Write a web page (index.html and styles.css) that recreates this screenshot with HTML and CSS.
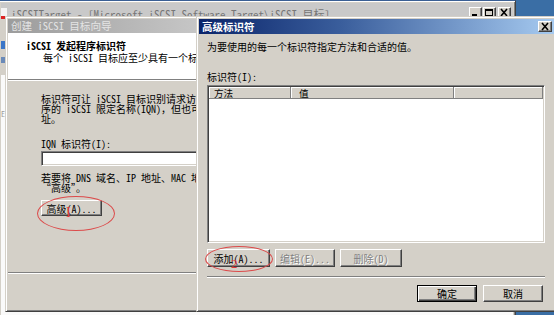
FILE: index.html
```html
<!DOCTYPE html>
<html lang="zh-CN">
<head>
<meta charset="utf-8">
<title>高级标识符</title>
<link rel="stylesheet" href="styles.css">
</head>
<body>
<div class="desktop">

  <div class="win app">
    <div class="app-title">
      <svg class="app-icon" width="7" height="16" viewBox="0 0 7 16"><rect x="0" y="3" width="6" height="8" fill="#f4f4f4"/><rect x="0" y="11" width="6" height="5" fill="#d22"/></svg>
      <span class="app-title-text">iSCSITarget - [Microsoft iSCSI Software Target\iSCSI 目标]</span>
      <div class="caps">
        <span class="cap"><svg width="11" height="9" viewBox="0 0 11 9"><rect x="2" y="6" width="5" height="2" fill="#000"/></svg></span>
        <span class="cap"><svg width="11" height="9" viewBox="0 0 11 9"><rect x="1.5" y="1.5" width="7" height="6" fill="none" stroke="#000"/><rect x="1" y="1" width="8" height="2" fill="#000"/></svg></span>
        <span class="cap cap-close"><svg width="11" height="9" viewBox="0 0 11 9"><path d="M2 1 L8 8 M8 1 L2 8" stroke="#000" stroke-width="1.6"/></svg></span>
      </div>
    </div>
    <div class="app-body">
      <div class="app-tools">
        <span class="tool tool-a"></span>
        <span class="tool tool-b"></span>
      </div>
      <div class="app-pane"><span class="pane-e">E</span></div>
    </div>
  </div>

  <div class="win wizard">
    <div class="title inactive">创建 iSCSI 目标向导</div>
    <div class="wiz-head">
      <div class="wiz-h1">iSCSI 发起程序标识符</div>
      <div class="wiz-h2">每个 iSCSI 目标应至少具有一个标识符。</div>
    </div>
    <div class="wiz-body">
      <p class="para">
        <span class="ln">标识符可让 iSCSI 目标识别请求访问的发起程序。默认标识符是发起程</span>
        <span class="ln">序的 iSCSI 限定名称(IQN)，但也可以使用 DNS 域名、IP 地址或 MAC 地</span>
        <span class="ln">址。</span>
      </p>
      <div class="field-label">IQN 标识符(I):</div>
      <div class="field"></div>
      <p class="para para2">
        <span class="ln">若要将 DNS 域名、IP 地址、MAC 地址用作标识符，请单击</span>
        <span class="ln">“高级”。</span>
      </p>
      <div class="wiz-btnrow"><span class="btn btn-adv">高级(A)...</span></div>
    </div>
    <div class="wiz-foot"></div>
  </div>

  <div class="win dialog">
    <div class="title active">
      <span>高级标识符</span>
      <span class="cap cap-close dlg-close"><svg width="11" height="9" viewBox="0 0 11 9"><path d="M2 1 L8 8 M8 1 L2 8" stroke="#000" stroke-width="1.6"/></svg></span>
    </div>
    <div class="dlg-body">
      <div class="desc">为要使用的每一个标识符指定方法和合适的值。</div>
      <div class="lbl">标识符(I):</div>
      <div class="list">
        <div class="list-head">
          <span class="col col-1">方法</span>
          <span class="col col-2">值</span>
          <span class="col col-3"></span>
        </div>
        <div class="list-rows"></div>
      </div>
      <div class="btnrow">
        <span class="btn btn-add">添加(A)...</span>
        <span class="btn btn-edit disabled">编辑(E)...</span>
        <span class="btn btn-del disabled">删除(D)</span>
      </div>
      <div class="sep"></div>
      <div class="okrow">
        <span class="btn btn-ok default">确定</span>
        <span class="btn btn-cancel">取消</span>
      </div>
    </div>
  </div>

  <div class="mark ring ring1"></div>
  <span class="mark note note1">I</span>
  <div class="mark ring ring2"></div>
  <span class="mark note note2">2</span>

</div>
</body>
</html>
```

FILE: styles.css
```css
html, body {
  margin: 0;
  padding: 0;
}

body {
  width: 554px;
  height: 315px;
  overflow: hidden;
  background: #3a6ea5;
  font-family: "Noto Sans Mono CJK SC", "Noto Sans CJK SC", sans-serif;
  font-size: 10px;
  color: #000;
}

.desktop {
  position: relative;
  width: 554px;
  height: 315px;
  overflow: hidden;
}

/* classic window frame */
.win {
  position: absolute;
  box-sizing: border-box;
  background: #d4d0c8;
  border: 1px solid;
  border-color: #d4d0c8 #404040 #404040 #d4d0c8;
  box-shadow: inset 1px 1px #fff, inset -1px -1px #808080;
  padding: 2px;
  display: flex;
  flex-direction: column;
}

/* background application window */
.app {
  left: -2px;
  top: 0;
  width: 518px;
  height: 330px;
  border-top-color: #3a5f94;
  background: #d4d0c8;
}

.app-title {
  height: 16px;
  display: flex;
  align-items: center;
  background: #c9c9c9;
  color: #767676;
  font-size: 11px;
}

.app-icon {
  flex: none;
  margin-top: 4px;
}

.app-title-text {
  margin-left: 3px;
  padding-top: 5px;
  white-space: nowrap;
}

.caps {
  margin-left: auto;
  display: flex;
  gap: 1px;
  padding-right: 2px;
  padding-top: 3px;
}

.cap {
  box-sizing: border-box;
  width: 13px;
  height: 12px;
  background: #d4d0c8;
  border: 1px solid;
  border-color: #fff #404040 #404040 #fff;
  box-shadow: inset -1px -1px #808080;
  display: flex;
  align-items: center;
  justify-content: center;
}

.cap-close {
  margin-left: 1px;
}

.app-body {
  flex: 1;
  display: flex;
  flex-direction: column;
  background: #fff;
}

.app-tools {
  height: 56px;
  background: #d4d0c8;
  display: flex;
  flex-direction: column;
  gap: 8px;
  padding-top: 22px;
  box-sizing: border-box;
}

.tool {
  display: block;
  width: 5px;
  height: 8px;
}

.tool-a { background: #3b76c8; }
.tool-b { background: #6a8ab8; height: 6px; }

.app-pane {
  flex: 1;
  background: #fafafa;
  color: #9a9a9a;
  padding-top: 30px;
}

.pane-e {
  font-size: 8px;
}

/* title bars */
.title {
  height: 14px;
  line-height: 14px;
  padding-left: 3px;
  white-space: nowrap;
  flex: none;
  display: flex;
  align-items: center;
}

.title.inactive {
  background: linear-gradient(90deg, #9c9c9c, #c6c6c6);
  color: #e4e4e4;
  font-size: 10.6px;
}

.title.active {
  height: 15px;
  background: linear-gradient(90deg, #0a246a 0%, #3a5e9c 40%, #a6caf0 100%);
  color: #fff;
  font-weight: bold;
  font-size: 10.5px;
  padding-right: 2px;
}

.dlg-close {
  margin-left: auto;
  width: 14px;
  height: 11px;
}

/* wizard (its right part lies under the dialog) */
.wizard {
  left: 5px;
  top: 16px;
  width: 194px;
  height: 296px;
  overflow: hidden;
}

.wiz-head {
  height: 47px;
  background: #fff;
  border-bottom: 1px solid #808080;
  box-shadow: 0 1px #fff;
  flex: none;
  padding-top: 7px;
  box-sizing: border-box;
  overflow: hidden;
}

.wiz-h1 {
  padding-left: 18px;
  font-weight: bold;
  line-height: 12px;
  white-space: nowrap;
}

.wiz-h2 {
  padding-left: 35px;
  line-height: 12px;
  white-space: nowrap;
}

.wiz-body {
  flex: none;
  height: 193px;
  padding: 14px 0 0 33px;
  box-sizing: border-box;
  border-bottom: 1px solid #808080;
  box-shadow: 0 1px #fff;
  white-space: nowrap;
  overflow: hidden;
}

.para {
  margin: 0;
  line-height: 10px;
}

.ln {
  display: block;
}

.field-label {
  margin-top: 14px;
  line-height: 12px;
}

.field {
  margin-top: 1px;
  height: 15px;
  width: 260px;
  box-sizing: border-box;
  background: #fff;
  border: 1px solid;
  border-color: #808080 #fff #fff #808080;
  box-shadow: inset 1px 1px #404040, inset -1px -1px #d4d0c8;
}

.para2 {
  margin-top: 7px;
}

.wiz-btnrow {
  margin-top: 7px;
  display: flex;
}

.wiz-foot {
  flex: 1;
}

/* buttons */
.btn {
  box-sizing: border-box;
  display: flex;
  align-items: center;
  justify-content: center;
  height: 17px;
  background: #d4d0c8;
  border: 1px solid;
  border-color: #fff #404040 #404040 #fff;
  box-shadow: inset -1px -1px #808080;
  white-space: nowrap;
}

.btn.default {
  border-color: #000;
  box-shadow: inset 1px 1px #fff, inset -1px -1px #404040, inset -2px -2px #808080;
}

.btn.disabled {
  color: #808080;
  text-shadow: 1px 1px #fff;
}

.btn-adv {
  width: 61px;
  height: 16px;
}

/* dialog */
.dialog {
  left: 196px;
  top: 16px;
  width: 361px;
  height: 296px;
}

.dlg-body {
  display: flex;
  flex-direction: column;
  padding: 7px 0 0 8px;
}

.desc {
  line-height: 12px;
  white-space: nowrap;
}

.lbl {
  margin-top: 18px;
  line-height: 12px;
}

.list {
  margin-top: 2px;
  width: 338px;
  height: 158px;
  box-sizing: border-box;
  background: #fff;
  border: 1px solid;
  border-color: #808080 #fff #fff #808080;
  box-shadow: inset 1px 1px #404040, inset -1px -1px #d4d0c8;
  padding: 1px;
  display: flex;
  flex-direction: column;
}

.list-head {
  display: flex;
  height: 12px;
  flex: none;
}

.col {
  box-sizing: border-box;
  height: 12px;
  display: flex;
  align-items: center;
  overflow: hidden;
  font-size: 9.6px;
  background: #d4d0c8;
  border-right: 1px solid #808080;
  border-bottom: 1px solid #808080;
  box-shadow: inset 1px 1px #fff;
  padding-left: 5px;
}

.col-1 { width: 82px; }
.col-2 { width: 163px; padding-left: 8px; }
.col-3 { flex: 1; }

.list-rows {
  flex: 1;
}

.btnrow {
  margin-top: 6px;
  display: flex;
  gap: 5px;
}

.btnrow .btn {
  height: 18px;
}

.btn-add { width: 63px; }
.btn-edit { width: 60px; }
.btn-del { width: 62px; }

.sep {
  margin-top: 9px;
  width: 338px;
  border-top: 1px solid #808080;
  border-bottom: 1px solid #fff;
}

.okrow {
  margin-top: 7px;
  width: 336px;
  display: flex;
  justify-content: flex-end;
  gap: 6px;
}

.btn-ok, .btn-cancel {
  width: 60px;
  height: 17px;
}

/* red annotations */
.mark {
  position: absolute;
}

.ring {
  box-sizing: border-box;
  border: 1.5px solid #dc4b4b;
  border-radius: 50%;
}

.ring1 {
  left: 37px;
  top: 196px;
  width: 78px;
  height: 35px;
}

.ring2 {
  left: 205px;
  top: 246px;
  width: 68px;
  height: 26px;
}

.note {
  color: #e03a3a;
  font-family: "Liberation Serif", serif;
  line-height: 1;
}

.note1 {
  left: 66px;
  top: 206px;
  font-size: 14px;
}

.note2 {
  left: 231px;
  top: 257px;
  font-size: 13px;
}
```
